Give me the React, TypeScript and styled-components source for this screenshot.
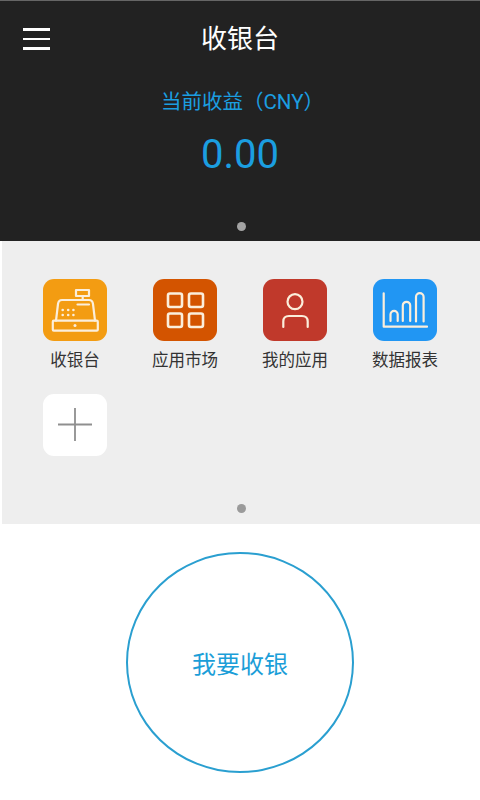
import styled, { createGlobalStyle } from "styled-components";

const GlobalStyle = createGlobalStyle`
  html, body {
    margin: 0;
    padding: 0;
    background: #fff;
  }
  * {
    box-sizing: border-box;
  }
`;

const apps = [
  { name: "收银台", color: "#f39c12", icon: <RegisterIcon /> },
  { name: "应用市场", color: "#d35400", icon: <GridIcon /> },
  { name: "我的应用", color: "#c0392b", icon: <PersonIcon /> },
  { name: "数据报表", color: "#2196f3", icon: <ChartIcon /> },
];

export default function App() {
  return (
    <>
      <GlobalStyle />
      <Page>
        <Header>
          <Toolbar>
            <MenuButton aria-label="menu">
              <MenuLine />
              <MenuLine />
              <MenuLine />
            </MenuButton>
            <Title>收银台</Title>
          </Toolbar>
          <EarningsLabel>当前收益（CNY）</EarningsLabel>
          <Earnings>0.00</Earnings>
          <HeaderDot />
        </Header>

        <AppPanel>
          <AppGrid>
            {apps.map((app) => (
              <AppItem key={app.name}>
                <Tile $color={app.color}>{app.icon}</Tile>
                <AppName>{app.name}</AppName>
              </AppItem>
            ))}
            <AppItem>
              <Tile $color="#fff">
                <PlusIcon />
              </Tile>
            </AppItem>
          </AppGrid>
          <PanelDot />
        </AppPanel>

        <CheckoutArea>
          <CheckoutButton>我要收银</CheckoutButton>
        </CheckoutArea>
      </Page>
    </>
  );
}

function TileSvg({ children }: { children: React.ReactNode }) {
  return (
    <svg
      width="64"
      height="62"
      viewBox="0 0 64 62"
      fill="none"
      stroke="#fbeedb"
      strokeWidth="2.2"
      strokeLinecap="round"
      strokeLinejoin="round"
    >
      {children}
    </svg>
  );
}

function RegisterIcon() {
  return (
    <TileSvg>
      <rect x="9.8" y="41.7" width="45" height="10" rx="1" />
      <path d="M13 41.7 L15 25 Q15.5 21 19 21 H46 Q49.5 21 50 25 L52 41.7" />
      <rect x="33" y="11" width="13" height="6" />
      <path d="M39.7 17 V21 M34.5 25.5 H46" />
      <g fill="#fbeedb" stroke="none">
        <circle cx="19.7" cy="31" r="1.3" />
        <circle cx="25.2" cy="31" r="1.3" />
        <circle cx="30.4" cy="31" r="1.3" />
        <circle cx="19.7" cy="36" r="1.3" />
        <circle cx="25.2" cy="36" r="1.3" />
        <circle cx="30.4" cy="36" r="1.3" />
        <circle cx="32" cy="46.5" r="1.5" />
      </g>
    </TileSvg>
  );
}

function GridIcon() {
  return (
    <TileSvg>
      <g strokeWidth="2.6">
        <rect x="15" y="14.5" width="14" height="13.5" rx="2" />
        <rect x="36" y="14.5" width="14" height="13.5" rx="2" />
        <rect x="15" y="34.5" width="14" height="13.5" rx="2" />
        <rect x="36" y="34.5" width="14" height="13.5" rx="2" />
      </g>
    </TileSvg>
  );
}

function PersonIcon() {
  return (
    <TileSvg>
      <circle cx="32" cy="22.7" r="7.5" />
      <path d="M20.3 48 V42.5 Q20.3 37 26 37 H39 Q44.7 37 44.7 42.5 V48" />
    </TileSvg>
  );
}

function ChartIcon() {
  return (
    <TileSvg>
      <path d="M10.7 14.3 V47.7 H54" />
      <path d="M17.5 42 V35.5 A3.6 3.6 0 0 1 24.7 35.5 V42" />
      <path d="M29.8 42 V26.5 A3.7 3.7 0 0 1 37.2 26.5 V42" />
      <path d="M43 42.5 V18 A3.8 3.8 0 0 1 50.6 18 V42.5" />
    </TileSvg>
  );
}

function PlusIcon() {
  return (
    <svg width="64" height="62" viewBox="0 0 64 62" stroke="#8f8f8f" strokeWidth="1.8">
      <path d="M15 30.5 H49 M32 14 V47" />
    </svg>
  );
}

const Page = styled.div`
  width: 480px;
  height: 800px;
  display: flex;
  flex-direction: column;
  overflow: hidden;
  background: #fff;
  font-family: Roboto, "Noto Sans CJK SC", sans-serif;
`;

const Header = styled.header`
  height: 241px;
  flex: none;
  display: flex;
  flex-direction: column;
  align-items: center;
  background: #222;
  border-top: 1px solid #666;
`;

const Toolbar = styled.div`
  width: 100%;
  height: 76px;
  padding: 0 23px;
  display: grid;
  grid-template-columns: 1fr auto 1fr;
  align-items: center;
`;

const MenuButton = styled.div`
  width: 27px;
  display: flex;
  flex-direction: column;
  gap: 7px;
`;

const MenuLine = styled.span`
  height: 2.5px;
  background: #fff;
`;

const Title = styled.h1`
  margin: 0;
  color: #fff;
  font-size: 26px;
  font-weight: 400;
  line-height: 76px;
`;

const EarningsLabel = styled.div`
  margin-top: 7px;
  padding-left: 5px;
  color: #1b9ee0;
  font-size: 20.5px;
  line-height: 36px;
`;

const Earnings = styled.div`
  margin-top: 10px;
  color: #1b9ee0;
  font-size: 40px;
  line-height: 50px;
`;

const Dot = styled.span`
  flex: none;
  width: 9px;
  height: 9px;
  border-radius: 50%;
  background: #a3a3a3;
`;

const HeaderDot = styled(Dot)`
  margin-top: auto;
  margin-bottom: 10px;
  margin-left: 2px;
`;

const AppPanel = styled.section`
  height: 283px;
  flex: none;
  margin-left: 2px;
  display: flex;
  flex-direction: column;
  align-items: center;
  background: #eee;
`;

const AppGrid = styled.div`
  width: 100%;
  height: 263px;
  flex: none;
  padding: 38px 0 0 18px;
  display: grid;
  grid-template-columns: repeat(4, 110px);
  grid-auto-rows: 115px;
`;

const AppItem = styled.div`
  display: flex;
  flex-direction: column;
  align-items: center;
`;

const Tile = styled.div<{ $color: string }>`
  width: 64px;
  height: 62px;
  border-radius: 11px;
  background: ${(p) => p.$color};
  svg {
    display: block;
  }
`;

const AppName = styled.span`
  margin-top: 9px;
  color: #333;
  font-size: 16.5px;
  line-height: 22px;
`;

const PanelDot = styled(Dot)`
  background: #9a9a9a;
`;

const CheckoutArea = styled.main`
  flex: 1;
  padding-top: 28px;
  display: flex;
  justify-content: center;
  align-items: flex-start;
`;

const CheckoutButton = styled.button`
  width: 228px;
  height: 221px;
  padding: 0;
  border: 2px solid #2a9fd0;
  border-radius: 50%;
  background: #fff;
  color: #1b9ed8;
  font-family: inherit;
  font-size: 24px;
`;
